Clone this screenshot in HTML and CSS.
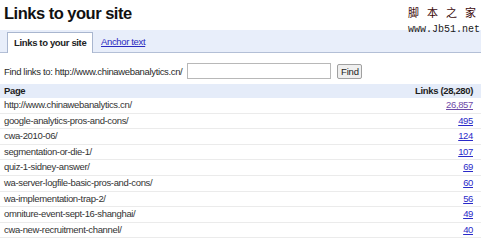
FILE: index.html
```html
<!DOCTYPE html>
<html>
<head>
<meta charset="utf-8">
<link rel="stylesheet" href="styles.css">
</head>
<body>
<div class="page">
  <h1 class="title">Links to your site</h1>
  <div class="watermark">
    <div class="wm-cn">脚本之家</div>
    <div class="wm-url">www.Jb51.net</div>
  </div>
  <div class="tabs">
    <div class="tab active">Links to your site</div>
    <a class="tab link" href="#">Anchor text</a>
  </div>
  <form class="find">
    <label class="find-label">Find links to: http://www.chinawebanalytics.cn/</label>
    <input class="find-input" type="text">
    <button class="find-btn" type="button">Find</button>
  </form>
  <table class="links">
    <thead>
      <tr><th class="col-page">Page</th><th class="col-num">Links (28,280)</th></tr>
    </thead>
    <tbody>
      <tr><td>http://www.chinawebanalytics.cn/</td><td class="col-num"><a class="visited" href="#">26,857</a></td></tr>
      <tr><td>google-analytics-pros-and-cons/</td><td class="col-num"><a href="#">495</a></td></tr>
      <tr><td>cwa-2010-06/</td><td class="col-num"><a href="#">124</a></td></tr>
      <tr><td>segmentation-or-die-1/</td><td class="col-num"><a href="#">107</a></td></tr>
      <tr><td>quiz-1-sidney-answer/</td><td class="col-num"><a href="#">69</a></td></tr>
      <tr><td>wa-server-logfile-basic-pros-and-cons/</td><td class="col-num"><a href="#">60</a></td></tr>
      <tr><td>wa-implementation-trap-2/</td><td class="col-num"><a href="#">56</a></td></tr>
      <tr><td>omniture-event-sept-16-shanghai/</td><td class="col-num"><a href="#">49</a></td></tr>
      <tr><td>cwa-new-recruitment-channel/</td><td class="col-num"><a href="#">40</a></td></tr>
    </tbody>
  </table>
</div>
</body>
</html>
```
FILE: styles.css
```css
html, body {
  margin: 0;
  padding: 0;
  background: #fff;
}
body {
  font-family: "Liberation Sans", Arial, sans-serif;
  font-size: 9.5px;
  letter-spacing: -0.35px;
  color: #2a2a2a;
}
.page {
  position: relative;
  width: 481px;
}
.title {
  margin: 0;
  padding: 3px 0 0 4px;
  font-size: 16.5px;
  letter-spacing: -0.5px;
  line-height: 20px;
  font-weight: bold;
  color: #111;
}
.watermark {
  position: absolute;
  top: 6px;
  left: 408px;
  display: flex;
  flex-direction: column;
  gap: 7px;
  letter-spacing: 0;
  white-space: nowrap;
}
.wm-cn {
  font-family: "Noto Sans CJK SC", sans-serif;
  font-size: 11px;
  line-height: 12px;
  letter-spacing: 8px;
  margin-right: -8px;
  color: #3a0808;
}
.wm-url {
  font-family: "Liberation Mono", monospace;
  font-size: 10px;
  line-height: 10px;
  color: #1a1a1a;
}
.tabs {
  margin-top: 7px;
  height: 22px;
  background: #e8eefa;
  border-bottom: 1px solid #b3bfd6;
  display: flex;
  align-items: flex-end;
  padding-left: 7px;
}
.tab {
  height: 20px;
  line-height: 20px;
}
.tab.active {
  box-sizing: border-box;
  width: 86px;
  height: 21px;
  margin-bottom: -1px;
  padding: 0 0 0 6px;
  background: #fff;
  border: 1px solid #a9b6cf;
  border-bottom: none;
  font-weight: bold;
  color: #222;
}
.tab.link {
  margin-left: 8px;
  color: #2a2ac0;
  text-decoration: underline;
}
.find {
  display: flex;
  align-items: center;
  margin: 10px 0 0 4px;
  height: 16px;
}
.find-input {
  margin: 0 0 0 5px;
  width: 144px;
  height: 16px;
  box-sizing: border-box;
  border: 1px solid #b8b8b8;
  padding: 0;
}
.find-btn {
  margin-left: 6px;
  width: 25px;
  height: 15px;
  box-sizing: border-box;
  padding: 0;
  font-family: "Liberation Sans", Arial, sans-serif;
  font-size: 9.5px;
  letter-spacing: -0.2px;
  background: #efefef;
  border: 1px solid #a0a0a0;
  border-radius: 2px;
  color: #222;
}
.links {
  margin-top: 5px;
  width: 481px;
  border-collapse: collapse;
}
.links th {
  background: #e5ecf9;
  font-weight: bold;
  height: 14px;
  line-height: 14px;
  padding: 0 8px 0 4px;
  text-align: left;
  color: #1e1e1e;
}
.links th.col-num,
.links td.col-num {
  text-align: right;
}
.links td {
  height: 14.6px;
  line-height: 14.6px;
  padding: 0 8px 0 4px;
  border-bottom: 1px solid #ebebeb;
  color: #333;
}
.links a {
  color: #2a2ac8;
  text-decoration: underline;
}
.links a.visited {
  color: #6e4aa8;
}
```
